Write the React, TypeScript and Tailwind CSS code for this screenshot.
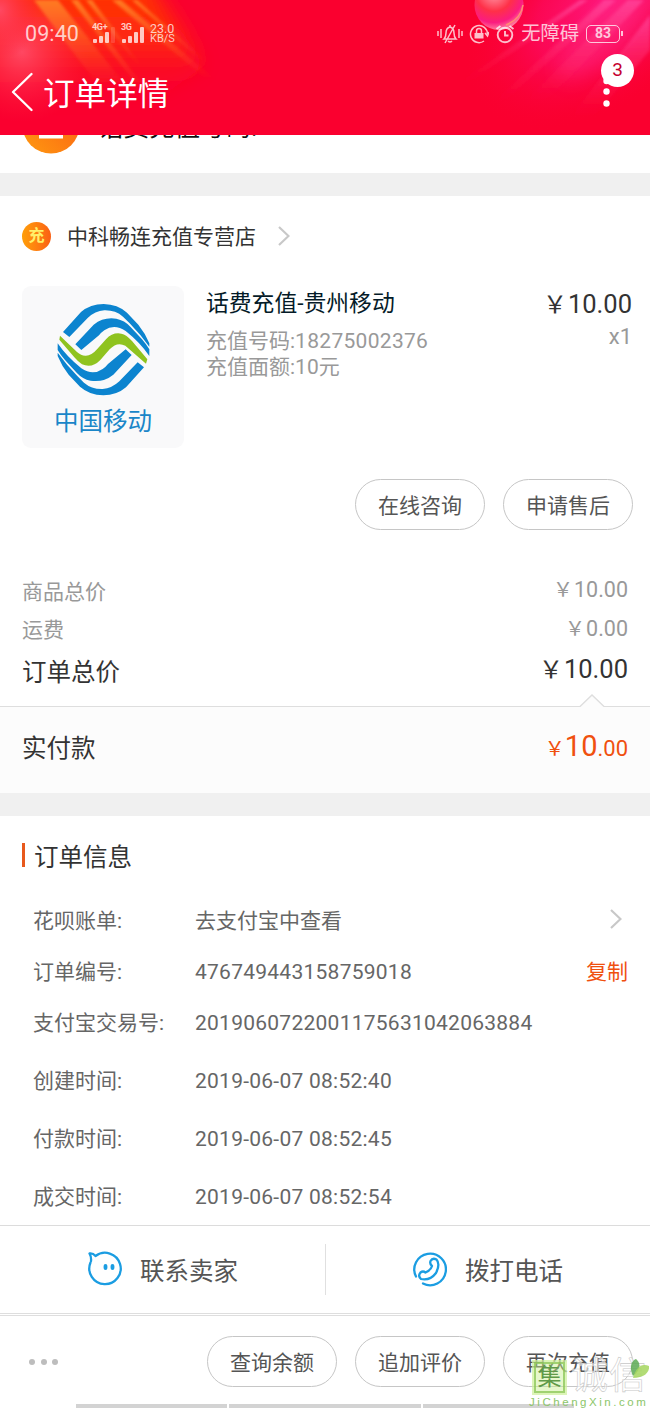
import type { ReactNode } from "react";

type InfoItem = {
  label: string;
  value: string;
  action?: ReactNode;
};

const shortRows: InfoItem[] = [
  {
    label: "花呗账单:",
    value: "去支付宝中查看",
    action: <Chevron className="mr-[6px] mb-[5px] h-5 w-3" />,
  },
  {
    label: "订单编号:",
    value: "476749443158759018",
    action: <span className="text-[#f0500f]">复制</span>,
  },
  { label: "支付宝交易号:", value: "2019060722001175631042063884" },
];

const timeRows: InfoItem[] = [
  { label: "创建时间:", value: "2019-06-07 08:52:40" },
  { label: "付款时间:", value: "2019-06-07 08:52:45" },
  { label: "成交时间:", value: "2019-06-07 08:52:54" },
];

function Chevron({ className }: { className: string }) {
  return (
    <svg viewBox="0 0 12 20" className={className} fill="none" stroke="#c8c8c8" strokeWidth="2.2">
      <path d="M1 1l9.500 9L1 19" />
    </svg>
  );
}

function PillButton({ children }: { children: ReactNode }) {
  return (
    <button
      type="button"
      className="flex h-[51px] w-[130px] items-center justify-center rounded-full border border-[#c6c6c6] pt-[4px] text-[21px] text-[#555]"
    >
      {children}
    </button>
  );
}

function InfoRow({ item, className }: { item: InfoItem; className: string }) {
  return (
    <div className={`flex items-center pr-[22px] pl-[33px] text-[21px] text-[#666] ${className}`}>
      <span className="w-[162px] shrink-0">{item.label}</span>
      <span className={item.value.startsWith("去") ? "" : "tracking-[0.25px]"}>{item.value}</span>
      <span className="ml-auto">{item.action}</span>
    </div>
  );
}

function HeaderArt() {
  return (
    <svg viewBox="0 0 650 135" className="absolute inset-0 h-full w-full" preserveAspectRatio="none">
      <defs>
        <linearGradient id="leftGlow" x1="0" y1="0" x2="0" y2="1">
          <stop offset="0" stopColor="#ff3a04" />
          <stop offset="0.500" stopColor="#ff2e08" stopOpacity="0.900" />
          <stop offset="1" stopColor="#fa002f" stopOpacity="0" />
        </linearGradient>
        <radialGradient id="pinkLeft" cx="0.500" cy="0.500" r="0.500">
          <stop offset="0" stopColor="#ff4a66" stopOpacity="0.950" />
          <stop offset="1" stopColor="#ff2040" stopOpacity="0" />
        </radialGradient>
        <radialGradient id="pinkRight" gradientUnits="userSpaceOnUse" cx="0" cy="0" r="1" gradientTransform="translate(610 0) rotate(-38) scale(170 100)">
          <stop offset="0" stopColor="#ff1880" />
          <stop offset="0.500" stopColor="#fc0a60" stopOpacity="0.750" />
          <stop offset="1" stopColor="#fa002f" stopOpacity="0" />
        </radialGradient>
        <radialGradient id="planet" cx="0.400" cy="0.250" r="0.750">
          <stop offset="0" stopColor="#ff9fae" />
          <stop offset="0.500" stopColor="#ff3048" />
          <stop offset="0.800" stopColor="#fb1c80" />
          <stop offset="1" stopColor="#ff7b9c" />
        </radialGradient>
        <linearGradient id="fade" x1="0" y1="0" x2="0" y2="1">
          <stop offset="0" stopColor="#ff8a28" stopOpacity="0.850" />
          <stop offset="1" stopColor="#ff5020" stopOpacity="0" />
        </linearGradient>
        <linearGradient id="fadePink" x1="0" y1="0" x2="0" y2="1">
          <stop offset="0" stopColor="#ff4aa0" stopOpacity="0.700" />
          <stop offset="1" stopColor="#ff2050" stopOpacity="0" />
        </linearGradient>
        <filter id="soft" x="-20%" y="-20%" width="140%" height="140%">
          <feGaussianBlur stdDeviation="1.800" />
        </filter>
        <filter id="softer" x="-20%" y="-20%" width="140%" height="140%">
          <feGaussianBlur stdDeviation="10" />
        </filter>
      </defs>
      <rect width="650" height="135" fill="#fa002f" />
      <path d="M-30 -30H140L205 65L150 105H-30Z" fill="url(#leftGlow)" filter="url(#softer)" />
      <ellipse cx="22" cy="52" rx="70" ry="70" fill="url(#pinkLeft)" />
      <ellipse cx="0" cy="10" rx="40" ry="50" fill="url(#pinkLeft)" />
      <g fill="url(#fade)" filter="url(#soft)">
        <path d="M34 0h24l70 88h-28z" />
        <path d="M71 0h7l70 92h-6z" />
        <path d="M86 0h6l50 66h-4z" />
        <path d="M112 0h9l95 80h-9z" />
        <path d="M132 0h5l70 62h-5z" />
      </g>
      <rect x="400" width="250" height="135" fill="url(#pinkRight)" />
      <ellipse cx="605" cy="32" rx="62" ry="20" fill="#ff3a90" opacity="0.350" filter="url(#softer)" transform="rotate(-45 605 32)" />
      <g fill="url(#fadePink)" filter="url(#soft)">
        <path d="M580 0h8l-118 82h-10z" />
        <path d="M604 0h12l-112 102h-10z" />
        <path d="M628 0h16l-96 100h-22z" />
        <path d="M650 15v35l-55 66h-24z" />
      </g>
      <ellipse cx="499" cy="5" rx="24.500" ry="25" fill="url(#planet)" />
      <path d="M506 25q15-6 17-20" stroke="#ff8f70" strokeWidth="1.500" fill="none" />
    </svg>
  );
}

function SignalBars({ label, bars }: { label: string; bars: number }) {
  return (
    <div className="relative h-[20px] w-[24px]">
      <span className="absolute -top-[1px] left-0 text-[9px] leading-[9px] font-bold tracking-[-0.300px]">{label}</span>
      <svg viewBox="0 0 24 20" className="h-full w-full" fill="currentColor">
        <rect x="1" y="15" width="4" height="4" rx="1" />
        <rect x="7" y="12" width="4" height="7" rx="1" />
        <rect x="13" y="8" width="4" height="11" rx="1" />
        <rect x="19" y="3" width="4" height="16" rx="1" opacity={bars === 4 ? 1 : 0.2} />
      </svg>
    </div>
  );
}

function StatusBar() {
  return (
    <div className="relative flex h-[67px] items-center pr-[27px] pl-[25px] text-white/75">
      <span className="mt-[2px] w-[67px] text-[21.500px] tracking-[0.100px]">09:40</span>
      <SignalBars label="4G+" bars={3} />
      <div className="w-[5px]" />
      <SignalBars label="3G" bars={4} />
      <div className="ml-[5px] text-[12.500px] leading-[10px]">
        <div>23.0</div>
        <div className="text-[11px]">KB/S</div>
      </div>
      <svg viewBox="0 0 26 20" className="ml-auto h-5 w-[26px]" fill="none" stroke="currentColor" strokeWidth="1.500">
        <path d="M1 7v5M4 5v9M22 5v9M25 7v5M7 15q2-2 2-6q0-5 4-6q4 1 4 6q0 4 2 6zM13 3V1M11 17q2 2 4 0M8 19L18 1" />
      </svg>
      <svg viewBox="0 0 20 20" className="ml-[6px] h-5 w-5" fill="none" stroke="currentColor" strokeWidth="1.500">
        <path d="M15 17A8.500 8.500 0 1 1 18.500 10M16 9l2.500 3l1.500-4" />
        <rect x="5.500" y="9" width="9" height="5.500" fill="currentColor" stroke="none" />
        <path d="M7.500 9V7a2.500 2.500 0 0 1 5 0v2" />
      </svg>
      <svg viewBox="0 0 20 20" className="ml-[6px] h-5 w-5" fill="none" stroke="currentColor" strokeWidth="1.900">
        <circle cx="10" cy="11" r="7.300" />
        <path d="M10 7v4.500h3.500M1.500 5l4-3M18.500 5l-4-3" />
      </svg>
      <span className="mt-[2px] ml-[6px] text-[19.300px]">无障碍</span>
      <div className="ml-[7px] flex h-[18px] w-[34px] items-center justify-center rounded-[5px] border border-white/75 text-[14px] font-bold">
        83
      </div>
      <div className="ml-px h-[5px] w-[2px] bg-white/75" />
    </div>
  );
}

function TitleBar() {
  return (
    <div className="relative flex h-[54px] items-center pr-[29px] pl-[11px] text-white">
      <svg viewBox="0 0 22 40" className="-mt-[4px] h-10 w-[22px]" fill="none" stroke="currentColor" strokeWidth="2.300" strokeLinecap="round" strokeLinejoin="round">
        <path d="M20.500 2L2 20L20.500 38" />
      </svg>
      <h1 className="ml-[10px] pt-[2px] text-[31.600px]">订单详情</h1>
      <div className="relative -mt-[8px] ml-auto h-[40px] w-[22px]">
        <svg viewBox="0 0 22 40" className="h-full w-full" fill="currentColor">
          <circle cx="7.500" cy="11" r="3.200" />
          <circle cx="7.500" cy="21.500" r="3.200" />
          <circle cx="7.500" cy="33.500" r="3.200" />
        </svg>
        <span className="absolute -top-[16px] left-[2px] flex h-[33px] w-[33px] items-center justify-center rounded-full bg-white text-[19px] text-[#c5002e]">
          3
        </span>
      </div>
    </div>
  );
}

function MobileLogo() {
  return (
    <svg viewBox="20 21 279 279" className="h-[93px] w-[93px]">
      <defs>
        <g id="waves" fill="#0c84cf">
          <path d="M38 108L92 48Q120 24 160 24Q202 25 230 50L264 86Q285 112 297 142V152Q270 115 238 82L218 62Q195 42 162 43Q134 45 112 66L57 123Z" />
          <path d="M75 145L130 86Q160 62 198 68Q223 73 240 92L275 130Q288 145 297 160V180Q270 140 226 105Q192 82 162 103Q152 110 146 118L93 162Z" />
        </g>
      </defs>
      <use href="#waves" />
      <use href="#waves" transform="rotate(180 159.500 161)" />
      <path
        d="M29 119L80 168Q92 179 105 179Q123 180 140 160L167 130Q187 108 213 113Q228 116 245 135L291 190L287 203L225 149Q200 136 178 160L150 192Q125 218 95 205Q83 197 72 184L27 131Z"
        fill="#8fc31f"
      />
    </svg>
  );
}

function ProductCard() {
  return (
    <div className="flex h-[162px] pr-[18px] pl-[22px]">
      <div className="flex w-[162px] flex-col items-center rounded-[9px] bg-[#f9f9fa] pt-[17px]">
        <MobileLogo />
        <span className="mt-[9px] text-[24.500px] leading-[34px] text-[#1a86c8]">中国移动</span>
      </div>
      <div className="ml-[22px]">
        <h2 className="mt-[3px] text-[22.800px] leading-[30px] text-[#051b28]">话费充值-贵州移动</h2>
        <div className="mt-[9px] text-[21px] leading-[26px] text-[#999]">
          <p>
            充值号码:<span className="tracking-[0.300px]">18275002376</span>
          </p>
          <p>充值面额:10元</p>
        </div>
      </div>
      <div className="ml-auto text-right">
        <p className="mt-[3px] text-[25.500px] leading-[30px] text-[#333]">
          <span className="mr-px text-[24px]">￥</span>10.00
        </p>
        <p className="mt-[3px] text-[22px] leading-[28px] text-[#999]">x1</p>
      </div>
    </div>
  );
}

function Totals() {
  return (
    <div className="h-[133px] pr-[22px] pl-[22px]">
      <div className="flex h-[38px] items-center justify-between text-[21px] text-[#999]">
        <span className="pt-px">商品总价</span>
        <span className="pb-[4px] text-[21.500px]">
          <span className="mr-px text-[20px]">￥</span>10.00
        </span>
      </div>
      <div className="flex h-[39px] items-center justify-between text-[21px] text-[#999]">
        <span className="pt-px">运费</span>
        <span className="pb-[3px] text-[21.500px]">
          <span className="mr-px text-[20px]">￥</span>0.00
        </span>
      </div>
      <div className="flex h-[43px] items-center justify-between text-[24.500px] text-[#333]">
        <span className="pt-[4px]">订单总价</span>
        <span className="pb-[4px] text-[25.500px]">
          <span className="mr-px text-[24px]">￥</span>10.00
        </span>
      </div>
    </div>
  );
}

function Paid() {
  return (
    <div className="relative flex h-[87px] items-center justify-between border-t border-[#dedede] bg-[#fcfcfc] px-[22px]">
      <svg viewBox="0 0 26 14" className="absolute -top-[13px] right-[45px] h-[14px] w-[26px]">
        <path d="M1 13L13 1L25 13V14H1Z" fill="#fcfcfc" />
        <path d="M1 12.500L13 1L25 12.500" fill="none" stroke="#dedede" strokeWidth="1.400" />
      </svg>
      <span className="pb-px text-[24.500px] text-[#333]">实付款</span>
      <span className="pb-[6px] text-[22px] text-[#f0500f]">
        <span className="text-[20px]">￥</span>
        <span className="text-[29px]">10</span>.00
      </span>
    </div>
  );
}

function ContactBar() {
  return (
    <div className="flex h-[91px] items-center border-t border-t-[#dcdcdc] pb-[3px] text-[24.500px] text-[#555]">
      <div className="flex flex-1 items-center pb-[2px] pl-[86px]">
        <svg viewBox="0 0 36 36" className="h-9 w-9" fill="none" stroke="#1b9de2" strokeWidth="2.300" strokeLinecap="round" strokeLinejoin="round">
          <path d="M5 10Q5.500 6 3.500 2.500Q7 2 9.500 5A15.700 15.700 0 1 1 4.500 11.500" />
          <path d="M19.500 15v2M26.500 15v2" strokeWidth="3.800" />
        </svg>
        <span className="ml-[18px] pt-[8px]">联系卖家</span>
      </div>
      <div className="h-[51px] w-px bg-[#e0e0e0]" />
      <div className="flex flex-1 items-center pb-[2px] pl-[85px]">
        <svg viewBox="0 0 36 36" className="h-9 w-9" fill="none" stroke="#1b9de2" strokeWidth="2.300" strokeLinecap="round" strokeLinejoin="round">
          <path d="M5 25.500A15.800 15.800 0 1 1 12 32.500" />
          <path d="M19.500 10Q18.500 13 21 15Q20 19 14.500 21.500Q12 19.500 9.500 21.500Q6.500 25 10 28Q19 30 25 22Q29.500 13 25.500 8.500Q21.500 6.500 19.500 10Z" />
        </svg>
        <span className="ml-[18px] pt-[8px]">拨打电话</span>
      </div>
    </div>
  );
}

function Watermark() {
  return (
    <div className="absolute right-0 bottom-[-1px] w-[121px]">
      <div className="flex items-center">
        <span className="ml-[5px] flex h-[31px] w-[31px] items-center justify-center border-2 border-[#8fc85a]/80 bg-[#c8ee8e]/45 text-[24px] text-[#5f9a48] outline-2 outline-[#cdf09a]/70">
          集
        </span>
        <span className="ml-[6px] text-[37px] leading-[38px] tracking-[1px] text-white/60 [-webkit-text-stroke:0.600px_#c8c8c8]">
          诚信
        </span>
      </div>
      <svg viewBox="0 0 20 22" className="absolute top-0 right-0 h-[22px] w-[20px]">
        <path d="M3 18C-1 10 1 3 6 1C11 5 11 12 3 18Z" fill="#5daa55" opacity="0.850" />
        <path d="M3 20C6 9 12 5 19 8C20 15 13 20 3 20Z" fill="#a4d65e" opacity="0.850" />
      </svg>
      <p className="font-['Liberation_Sans',sans-serif] text-[11.500px] leading-[13px] tracking-[2.550px] text-[#8cc66a]">
        JiChengXin.com
      </p>
    </div>
  );
}

export default function App() {
  return (
    <main className="relative flex h-[1408px] w-[650px] flex-col overflow-hidden bg-white font-['Roboto','Noto_Sans_CJK_SC',sans-serif]">
      <header className="relative h-[135px] shrink-0 overflow-hidden">
        <HeaderArt />
        <StatusBar />
        <TitleBar />
      </header>

      <div className="flex h-[38px] shrink-0 items-start overflow-hidden pl-[22px]">
        <svg viewBox="0 0 58 58" className="-mt-[39px] h-[58px] w-[58px] shrink-0">
          <defs>
            <linearGradient id="orange" x1="0" y1="1" x2="1" y2="0">
              <stop offset="0" stopColor="#ff9a10" />
              <stop offset="1" stopColor="#fa5a14" />
            </linearGradient>
          </defs>
          <circle cx="29" cy="29" r="28.500" fill="url(#orange)" />
          <rect x="17" y="20" width="24" height="22.500" fill="#fff" />
        </svg>
        <span className="-mt-[26px] ml-[18px] text-[25.500px] leading-[36px] text-[#111]">话费充值号码:</span>
        <span className="-mt-[26px] ml-[70px] text-[24px] leading-[36px] text-[#111]">182750</span>
      </div>
      <div className="h-[23px] shrink-0 bg-[#f0f0f0]" />

      <section className="shrink-0">
        <div className="flex h-[80px] items-center pl-[22px]">
          <span className="flex h-[29px] w-[29px] items-center justify-center rounded-full bg-linear-to-r from-[#ff9e08] to-[#fa5f14] text-[16px] font-bold text-[#fff06a]">
            充
          </span>
          <span className="ml-[16px] pt-[3px] text-[21px] text-[#333]">中科畅连充值专营店</span>
          <Chevron className="ml-[22px] h-5 w-3" />
        </div>
        <div className="pt-[10px]">
          <ProductCard />
        </div>
        <div className="mt-[31px] flex justify-end gap-[18px] pr-[17px]">
          <PillButton>在线咨询</PillButton>
          <PillButton>申请售后</PillButton>
        </div>
        <div className="pt-[43px]">
          <Totals />
        </div>
        <Paid />
      </section>
      <div className="h-[23px] shrink-0 bg-[#f0f0f0]" />

      <section className="shrink-0">
        <div className="flex h-[79px] items-center pl-[22px]">
          <div className="mb-[2px] h-6 w-[3px] bg-[#e8591c]" />
          <h2 className="ml-[9px] pt-[5px] text-[24.500px] text-[#333]">订单信息</h2>
        </div>
        {shortRows.map((item) => (
          <InfoRow key={item.label} item={item} className="h-[51px] pt-[2px]" />
        ))}
        <div className="pt-[3px]">
          {timeRows.map((item) => (
            <InfoRow key={item.label} item={item} className="h-[58px] pt-[3px]" />
          ))}
        </div>
      </section>

      <ContactBar />

      <footer className="-mt-[3px] flex h-[91px] shrink-0 items-center gap-[18px] border-t-[3px] border-double border-[#dedede] pt-[3px] pr-[17px] pl-[29px]">
        <div className="mr-auto flex gap-[5.500px]">
          <i className="h-[6px] w-[6px] rounded-full bg-[#bdbdbd]" />
          <i className="h-[6px] w-[6px] rounded-full bg-[#bdbdbd]" />
          <i className="h-[6px] w-[6px] rounded-full bg-[#bdbdbd]" />
        </div>
        <PillButton>查询余额</PillButton>
        <PillButton>追加评价</PillButton>
        <PillButton>再次充值</PillButton>
      </footer>
      <div className="flex h-[4px] shrink-0 gap-[2px] pl-[76px]">
        <div className="w-[151px] bg-[#d3d3d3]" />
        <div className="w-[192px] bg-[#d3d3d3]" />
        <div className="w-[151px] bg-[#d3d3d3]" />
      </div>
      <Watermark />
    </main>
  );
}
